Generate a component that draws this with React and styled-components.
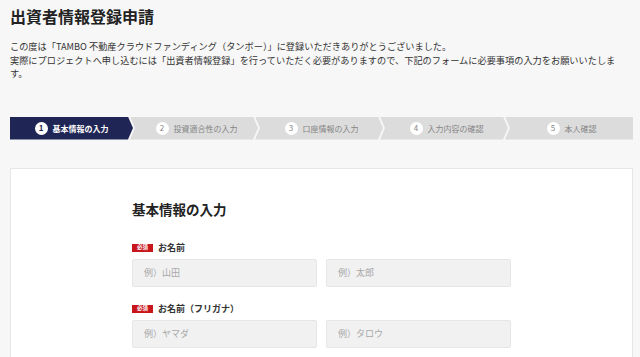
import React from 'react'
import styled, { createGlobalStyle } from 'styled-components'

const GlobalStyle = createGlobalStyle`
  html, body {
    margin: 0;
    padding: 0;
    background: #f7f7f7;
  }
  body {
    font-family: "Noto Sans CJK JP", "Noto Sans", sans-serif;
    color: #333;
    overflow: hidden;
  }
`

const Page = styled.div`
  padding: 4px 7px 0 10px;
  height: 357px;
  box-sizing: border-box;
`
const Title = styled.h1`
  margin: 0;
  font-size: 16px;
  line-height: 24px;
  font-weight: 700;
  color: #222;
`
const Lead = styled.p`
  margin: 12px 0 0;
  font-size: 9.2px;
  line-height: 13.5px;
  color: #333;
  white-space: nowrap;
`
const Steps = styled.ol`
  list-style: none;
  margin: 36px 0 0;
  padding: 0;
  display: flex;
  height: 23px;
`
const Step = styled.li`
  flex: 1;
  display: flex;
  align-items: center;
  justify-content: center;
  gap: 5px;
  margin-left: ${p => (p.$first ? '0' : '-3px')};
  padding-left: ${p => (p.$first ? '0' : '5px')};
  background: ${p => (p.$active ? '#1f2656' : '#dcdcdc')};
  color: ${p => (p.$active ? '#fff' : '#858585')};
  font-size: 8px;
  font-weight: ${p => (p.$active ? 700 : 400)};
  clip-path: ${p =>
    p.$first
      ? 'polygon(0 0, calc(100% - 5px) 0, 100% 50%, calc(100% - 5px) 100%, 0 100%)'
      : p.$last
        ? 'polygon(0 0, 100% 0, 100% 100%, 0 100%, 5px 50%)'
        : 'polygon(0 0, calc(100% - 5px) 0, 100% 50%, calc(100% - 5px) 100%, 0 100%, 5px 50%)'};
`
const StepNum = styled.span`
  width: 13px;
  height: 13px;
  border-radius: 50%;
  background: #fff;
  color: ${p => (p.$active ? '#1f2656' : '#858585')};
  font-weight: ${p => (p.$active ? 700 : 400)};
  font-size: 8px;
  display: flex;
  align-items: center;
  justify-content: center;
  line-height: 1;
`
const Card = styled.section`
  margin-top: 28px;
  background: #fff;
  border: 1px solid #e6e6e6;
  height: 400px;
  padding-top: 30px;
  box-sizing: border-box;
`
const Form = styled.form`
  width: 379px;
  margin: 0 auto;
  display: flex;
  flex-direction: column;
  gap: 16px;
`
const FormTitle = styled.h2`
  margin: 0 0 7px;
  font-size: 13.5px;
  line-height: 20px;
  font-weight: 700;
  color: #222;
`
const Field = styled.div`
  display: flex;
  flex-direction: column;
  gap: 5px;
`
const Label = styled.div`
  display: flex;
  align-items: center;
  gap: 5px;
  font-size: 9px;
  line-height: 12px;
  font-weight: 700;
  color: #333;
`
const Badge = styled.span`
  width: 21px;
  height: 8px;
  background: #c8161d;
  color: #fff;
  font-size: 5.5px;
  font-weight: 700;
  display: flex;
  align-items: center;
  justify-content: center;
  line-height: 1;
`
const Row = styled.div`
  display: grid;
  grid-template-columns: 1fr 1fr;
  gap: 9px;
`
const Input = styled.input`
  height: 28px;
  box-sizing: border-box;
  background: #f1f1f1;
  border: 1px solid #e6e6e6;
  border-radius: 2px;
  padding: 0 11px;
  font-family: inherit;
  font-size: 9px;
  color: #333;
  outline: none;
  &::placeholder {
    color: #a8a8a8;
  }
`

const steps = ['基本情報の入力', '投資適合性の入力', '口座情報の入力', '入力内容の確認', '本人確認']

export default function App() {
  return (
    <>
      <GlobalStyle />
      <Page>
        <Title>出資者情報登録申請</Title>
        <Lead>
          この度は「TAMBO 不動産クラウドファンディング（タンボー）」に登録いただきありがとうございました。
          <br />
          実際にプロジェクトへ申し込むには「出資者情報登録」を行っていただく必要がありますので、下記のフォームに必要事項の入力をお願いいたしま
          <br />
          す。
        </Lead>
        <Steps>
          {steps.map((s, i) => (
            <Step key={s} $active={i === 0} $first={i === 0} $last={i === steps.length - 1}>
              <StepNum $active={i === 0}>{i + 1}</StepNum>
              {s}
            </Step>
          ))}
        </Steps>
        <Card>
          <Form>
            <FormTitle>基本情報の入力</FormTitle>
            <Field>
              <Label><Badge>必須</Badge>お名前</Label>
              <Row>
                <Input placeholder="例）山田" />
                <Input placeholder="例）太郎" />
              </Row>
            </Field>
            <Field>
              <Label><Badge>必須</Badge>お名前（フリガナ）</Label>
              <Row>
                <Input placeholder="例）ヤマダ" />
                <Input placeholder="例）タロウ" />
              </Row>
            </Field>
          </Form>
        </Card>
      </Page>
    </>
  )
}
